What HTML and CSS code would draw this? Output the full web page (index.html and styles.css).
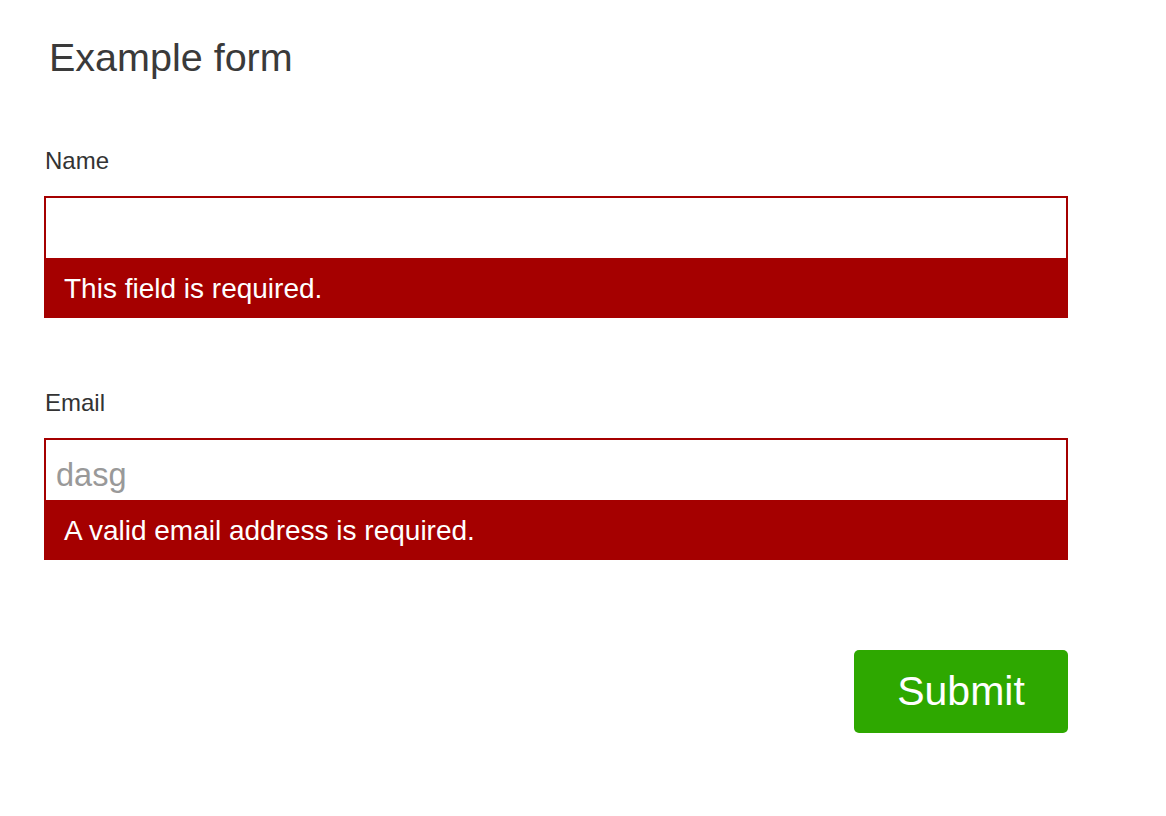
FILE: index.html
```html
<!DOCTYPE html>
<html lang="en">
<head>
<meta charset="utf-8">
<title>Example form</title>
<link rel="stylesheet" href="styles.css">
</head>
<body>
<main class="page">
  <h1 class="title">Example form</h1>
  <form class="form">
    <div class="field">
      <label class="label" for="name">Name</label>
      <div class="box">
        <input class="input" id="name" type="text">
        <div class="error">This field is required.</div>
      </div>
    </div>
    <div class="field">
      <label class="label" for="email">Email</label>
      <div class="box">
        <input class="input" id="email" type="text" placeholder="dasg">
        <div class="error">A valid email address is required.</div>
      </div>
    </div>
    <div class="actions">
      <button class="submit" type="button">Submit</button>
    </div>
  </form>
</main>
</body>
</html>
```

FILE: styles.css
```css
* { box-sizing: border-box; }
html, body { margin: 0; padding: 0; background: #fff; }
body {
  font-family: "Liberation Sans", Arial, Helvetica, sans-serif;
  color: #333;
}
.page {
  width: 1068px;
  padding: 34px 0 0 44px;
}
.title {
  margin: 0 0 0 5px;
  font-size: 39.5px;
  line-height: 47px;
  font-weight: normal;
  color: #3a3a3a;
}
.form {
  display: flex;
  flex-direction: column;
  margin-top: 65px;
}
.field {
  display: flex;
  flex-direction: column;
  margin-bottom: 70px;
}
.label {
  font-size: 24px;
  line-height: 30px;
  margin-left: 1px;
  margin-bottom: 20px;
  color: #333;
}
.box {
  border: 2px solid #a50000;
  display: flex;
  flex-direction: column;
}
.input {
  height: 60px;
  border: 0;
  outline: none;
  margin: 0;
  padding: 10px 10px 0;
  font-family: inherit;
  font-size: 32.5px;
  color: #333;
  background: #fff;
}
.input::placeholder { color: #999; opacity: 1; }
.error {
  height: 58px;
  background: #a50000;
  color: #fff;
  font-size: 28px;
  line-height: 54px;
  padding: 4px 0 0 18px;
}
.actions {
  display: flex;
  justify-content: flex-end;
  margin-top: 20px;
}
.submit {
  width: 214px;
  height: 83px;
  border: 0;
  border-radius: 5px;
  background: #2ea800;
  color: #fff;
  font-family: inherit;
  font-size: 41px;
  padding: 0;
  cursor: pointer;
}
```
